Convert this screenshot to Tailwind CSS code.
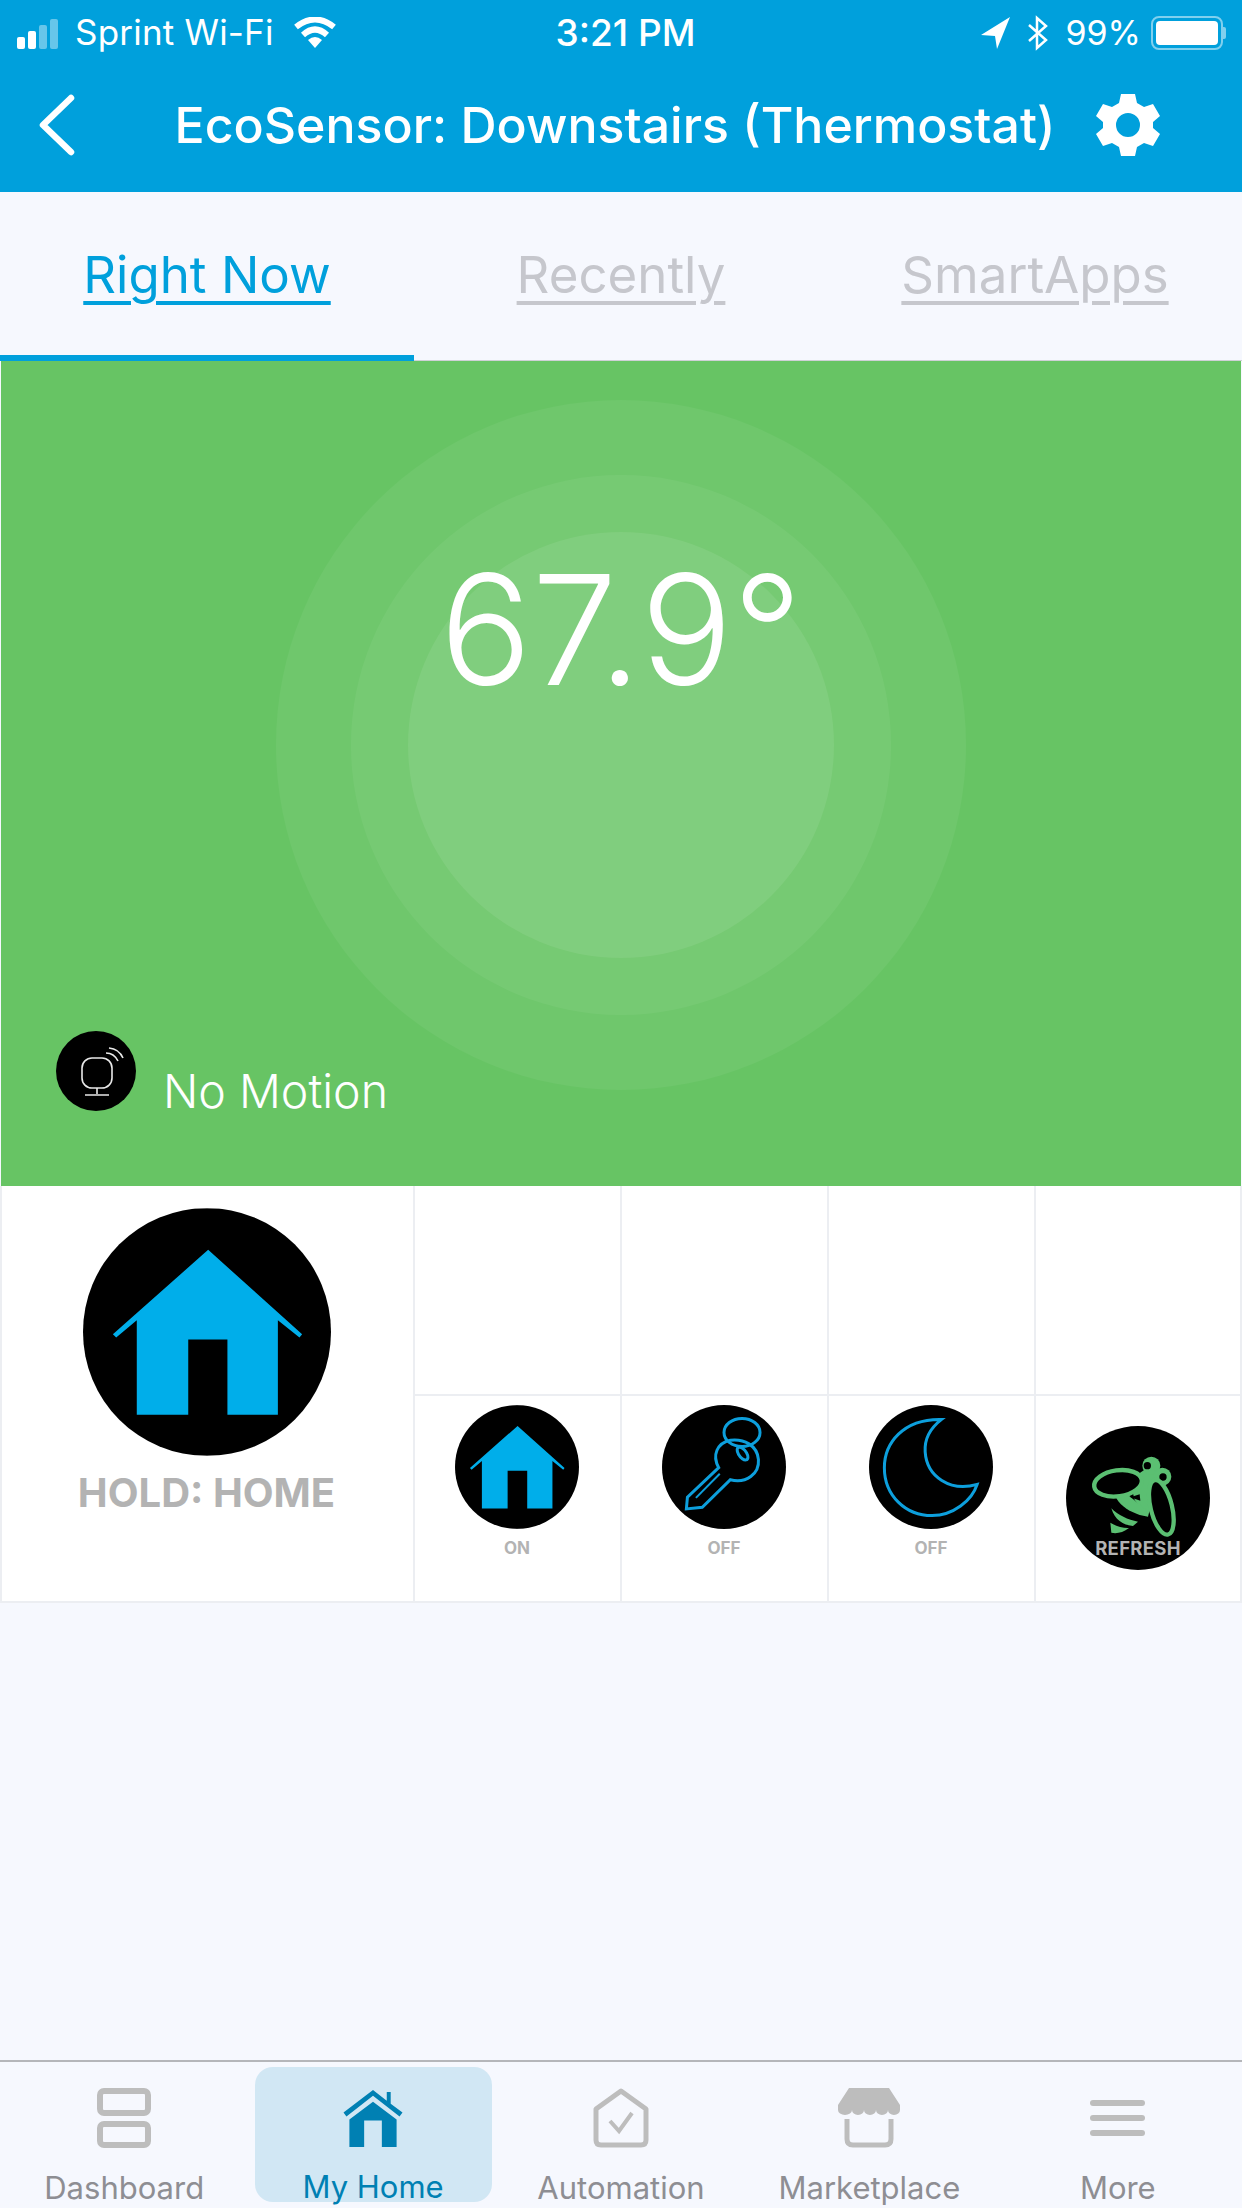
<!DOCTYPE html>
<html lang="en">
<head>
    <meta charset="UTF-8">
    <meta name="viewport" content="width=device-width, initial-scale=1.0">
    <title>EcoSensor: Downstairs (Thermostat)</title>
    <script src="https://cdn.jsdelivr.net/npm/@tailwindcss/browser@4"></script>
</head>
<body class="bg-[#f6f8fe] font-['Inter',sans-serif]">
<div class="w-[1242px] h-[2208px] flex flex-col overflow-hidden">

    <!-- Status bar + title -->
    <header class="h-[192px] shrink-0 bg-[#00a0dc] text-white">
        <div class="h-[64px] grid grid-cols-3 items-center pl-[17px] pr-[16px] pt-[1px] text-[35px] leading-none">
            <div class="flex items-center">
                <div class="flex items-end gap-[3px] h-[30px] mt-[2px]">
                    <span class="w-[8px] h-[12px] rounded-[2px] bg-white"></span>
                    <span class="w-[8px] h-[18px] rounded-[2px] bg-white"></span>
                    <span class="w-[8px] h-[24px] rounded-[2px] bg-white/40"></span>
                    <span class="w-[8px] h-[30px] rounded-[2px] bg-white/40"></span>
                </div>
                <span class="ml-[17px] tracking-[0.2px] whitespace-nowrap">Sprint Wi-Fi</span>
                <svg class="ml-[19px] shrink-0" width="44" height="32" viewBox="0 0 44 32">
                    <path d="M22 31 L15 23 Q22 17 29 23 Z" fill="#fff"/>
                    <path d="M10 18 Q22 7 34 18 M3 10 Q22 -5 41 10" fill="none" stroke="#fff" stroke-width="6"/>
                </svg>
            </div>
            <div class="text-center font-medium text-[37px] pl-[8px]">3:21 PM</div>
            <div class="flex items-center justify-end text-[34px]">
                <svg width="30" height="32" viewBox="0 0 30 32"><path d="M29 0 L0 18 L14 19 L16 32 Z" fill="#fff"/></svg>
                <svg class="ml-[15px]" width="24" height="36" viewBox="0 0 24 36"><path d="M3 10 L20 25 L11 33 V3 L20 11 L3 26" fill="none" stroke="#fff" stroke-width="2.5"/></svg>
                <span class="ml-[15px]">99%</span>
                <div class="ml-[10px] w-[72px] h-[34px] rounded-[8px] border-2 border-white/50 p-[3px]">
                    <div class="h-full w-full rounded-[4px] bg-white"></div>
                </div>
                <span class="w-[3px] h-[12px] rounded-r-[2px] bg-white/50"></span>
            </div>
        </div>
        <div class="h-[128px] flex items-center pb-[6px] pl-[38px] pr-[82px]">
            <svg class="shrink-0" width="38" height="62" viewBox="0 0 38 62"><path d="M33 4 L5 31 L33 58" fill="none" stroke="#fff" stroke-width="6.5" stroke-linecap="round" stroke-linejoin="round"/></svg>
            <h1 class="flex-1 text-center text-[50px] leading-none font-medium whitespace-nowrap pl-[94px]">EcoSensor: Downstairs (Thermostat)</h1>
            <svg class="ml-[36px] shrink-0" width="64" height="64" viewBox="0 0 64 64">
                <path fill="#fff" fill-rule="evenodd" d="M25 1 H39 L41 10 L48 14 L57 11 L64 23 L57 29 V35 L64 41 L57 53 L48 50 L41 54 L39 63 H25 L23 54 L16 50 L7 53 L0 41 L7 35 V29 L0 23 L7 11 L16 14 L23 10 Z M32 20 A12 12 0 1 0 32 44 A12 12 0 1 0 32 20 Z"/>
            </svg>
        </div>
    </header>

    <!-- Tabs -->
    <nav class="h-[169px] shrink-0 grid grid-cols-3 text-[51px] leading-none border-b border-[#cfd1d6]">
        <div class="flex items-center justify-center pt-[2px] border-b-[6px] border-[#00a0dc] -mb-px text-[#00a0dc] underline underline-offset-[8px] decoration-[4px]">Right Now</div>
        <div class="flex items-center justify-center pb-[4px] text-[#c6c7cd] underline underline-offset-[8px] decoration-[4px]">Recently</div>
        <div class="flex items-center justify-center pb-[4px] text-[#c6c7cd] underline underline-offset-[8px] decoration-[4px]">SmartApps</div>
    </nav>

    <!-- Temperature panel -->
    <section class="relative h-[825px] shrink-0 mx-px bg-[#67c464] text-white flex flex-col">
        <div class="absolute left-[275px] top-[39px] w-[690px] h-[690px] rounded-full bg-white/5"></div>
        <div class="absolute left-[350px] top-[114px] w-[540px] h-[540px] rounded-full bg-white/5"></div>
        <div class="absolute left-[407px] top-[171px] w-[426px] h-[426px] rounded-full bg-white/8"></div>
        <div class="relative pt-[192px] text-center text-[153px] leading-[1] font-light">67.9°</div>
        <div class="relative mt-auto pb-[72px] pl-[55px] flex">
            <div class="w-[80px] h-[80px] rounded-full bg-black flex items-center justify-center">
                <svg width="80" height="80" viewBox="0 0 80 80" fill="none" stroke="#e8e8e8" stroke-width="1.6">
                    <rect x="26" y="27" width="30" height="30" rx="10"/>
                    <path d="M41 57 V63 M29 64 H53"/>
                    <path d="M50 22 Q58 22 62 30 M53 17 Q63 18 67 27"/>
                </svg>
            </div>
            <span class="ml-[27px] mt-[37px] text-[46.5px] leading-none font-light whitespace-nowrap">No Motion</span>
        </div>
    </section>

    <!-- Tiles -->
    <section class="grid grid-cols-[415px_207px_207px_207px_206px] grid-rows-[210px_207px] h-[417px] shrink-0 bg-white text-[#b3b3b3] font-bold">
        <div class="row-span-2 border-x-2 border-b-2 border-[#eceef2] flex flex-col items-center pt-[22px] pr-[2px]">
            <svg class="rounded-full" width="248" height="248" viewBox="248 83 747 745">
                <rect x="248" y="83" width="747" height="745" fill="#000"/>
                <path d="M625 208 L908 462 L900 472 L835 420 V705 H683 V478 H565 V705 H410 V420 L348 472 L338 462 Z" fill="#00aeea"/>
            </svg>
            <span class="mt-[17px] text-[40px] leading-none">HOLD: HOME</span>
        </div>
        <div class="border-r-2 border-b-2 border-[#eceef2]"></div>
        <div class="border-r-2 border-b-2 border-[#eceef2]"></div>
        <div class="border-r-2 border-b-2 border-[#eceef2]"></div>
        <div class="border-r-2 border-b-2 border-[#eceef2]"></div>

        <div class="border-r-2 border-b-2 border-[#eceef2] flex flex-col items-center pt-[9px] pr-[1px]">
            <svg class="rounded-full" width="124" height="124" viewBox="248 83 747 745">
                <rect x="248" y="83" width="747" height="745" fill="#000"/>
                <path d="M625 208 L908 462 L900 472 L835 420 V705 H683 V478 H565 V705 H410 V420 L348 472 L338 462 Z" fill="#00aeea"/>
            </svg>
            <span class="mt-[11px] text-[17px] leading-none">ON</span>
        </div>
        <div class="border-r-2 border-b-2 border-[#eceef2] flex flex-col items-center pt-[9px] pr-[1px]">
            <svg class="rounded-full" width="124" height="124" viewBox="476 75 234 370" preserveAspectRatio="none">
                <rect x="476" y="75" width="234" height="370" fill="#000"/>
                <g fill="none" stroke="#0d9fdc">
                    <ellipse cx="627" cy="157" rx="34" ry="42" vector-effect="non-scaling-stroke" stroke-width="3"/>
                    <path d="M583 262 L524 350 L522 385 L552 380 L605 298 C635 310 660 280 658 238 C656 195 630 175 605 180 C580 188 570 225 583 262 Z" vector-effect="non-scaling-stroke" stroke-width="3"/>
                    <ellipse cx="628" cy="220" rx="8" ry="20" transform="rotate(-20 628 220)" vector-effect="non-scaling-stroke" stroke-width="3"/>
                    <path d="M540 352 L585 280" vector-effect="non-scaling-stroke" stroke-width="2"/>
                </g>
            </svg>
            <span class="mt-[11px] text-[17px] leading-none">OFF</span>
        </div>
        <div class="border-r-2 border-b-2 border-[#eceef2] flex flex-col items-center pt-[9px] pr-[1px]">
            <svg class="rounded-full" width="124" height="124" viewBox="866 75 234 370" preserveAspectRatio="none">
                <rect x="866" y="75" width="234" height="370" fill="#000"/>
                <path d="M1003 118 C930 115 895 190 895 262 C895 345 935 405 985 405 C1025 405 1060 360 1070 312 C1020 335 975 290 972 215 C970 170 985 140 1003 118 Z" fill="none" stroke="#0d9fdc" stroke-width="3" vector-effect="non-scaling-stroke"/>
            </svg>
            <span class="mt-[11px] text-[17px] leading-none">OFF</span>
        </div>
        <div class="border-r-2 border-b-2 border-[#eceef2] flex justify-center pt-[30px]">
            <div class="relative w-[144px] h-[144px] rounded-full bg-black">
                <svg class="rounded-full" width="144" height="144" viewBox="80 78 430 432">
                    <path d="M270 240 L335 195 L378 245 L340 290 L325 350 L285 300 Z" fill="#5bbf72"/>
                    <circle cx="335" cy="197" r="27" fill="#5bbf72"/>
                    <circle cx="368" cy="230" r="27" fill="#5bbf72"/>
                    <circle cx="323" cy="197" r="11" fill="#000"/>
                    <circle cx="370" cy="231" r="11" fill="#000"/>
                    <path d="M230 295 L265 285 L320 330 L325 350 L300 345 C270 335 245 320 230 295 Z" fill="#5bbf72"/>
                    <path d="M215 325 C235 345 265 360 295 365 L280 378 C250 375 225 360 215 325 Z M212 368 C228 378 250 385 268 384 C250 398 230 402 215 398 Z" fill="#5bbf72"/>
                    <path d="M272 292 L300 283 L302 302 Z" fill="#000"/>
                    <ellipse cx="235" cy="250" rx="72" ry="39" transform="rotate(-8 235 250)" fill="#000" stroke="#5bbf72" stroke-width="13"/>
                    <ellipse cx="365" cy="322" rx="32" ry="84" transform="rotate(-14 365 322)" fill="#000" stroke="#5bbf72" stroke-width="13"/>
                </svg>
                <span class="absolute inset-x-0 top-[113px] text-center text-[18.5px] leading-none tracking-[0.3px]">REFRESH</span>
            </div>
        </div>
    </section>

    <!-- Bottom tab bar -->
    <footer class="mt-auto h-[148px] shrink-0 border-t-2 border-[#b5b6ba] grid grid-cols-5 text-[31px] leading-none text-[#8e8e93]">
        <div class="flex flex-col items-center pt-[26px]">
            <svg width="54" height="60" viewBox="0 0 54 60" fill="none" stroke="#bdbdbd" stroke-width="6">
                <rect x="3" y="3" width="48" height="22" rx="4"/>
                <rect x="3" y="36" width="48" height="21" rx="4"/>
            </svg>
            <span class="mt-[24px]">Dashboard</span>
        </div>
        <div class="flex flex-col items-center pt-[5px] pl-[1px]">
            <div class="w-[237px] h-[135px] rounded-[18px] bg-[#d1e7f4] flex flex-col items-center pt-[21px] text-[#0080b3]">
                <svg width="64" height="60" viewBox="0 0 64 60">
                    <path d="M2 25 L32 2 L46 13 V4 H50 V16 L62 25 L59 29 L32 8 L5 29 Z" fill="#0080b3"/>
                    <path d="M32 14 L56 32 V60 H41 V33 H23 V60 H8 V32 Z" fill="#0080b3"/>
                </svg>
                <span class="mt-[24px]">My Home</span>
            </div>
        </div>
        <div class="flex flex-col items-center pt-[26px]">
            <svg width="56" height="60" viewBox="0 0 56 60" fill="none" stroke="#bdbdbd" stroke-width="5">
                <path d="M28 3 L53 21 V52 Q53 57 48 57 H8 Q3 57 3 52 V21 Z" stroke-linejoin="round"/>
                <path d="M17 33 L26 43 L39 25" stroke-width="4"/>
            </svg>
            <span class="mt-[24px]">Automation</span>
        </div>
        <div class="flex flex-col items-center pt-[26px]">
            <svg width="62" height="60" viewBox="0 0 62 60">
                <path d="M11 0 H51 L62 17 V22 A6 5 0 0 1 50 22 A6 5 0 0 1 38 22 A6 5 0 0 1 26 22 A6 5 0 0 1 14 22 A7 5 0 0 1 0 22 V17 Z" fill="#bdbdbd"/>
                <path d="M9 31 V51 Q9 57 15 57 H47 Q53 57 53 51 V31" fill="none" stroke="#bdbdbd" stroke-width="5"/>
            </svg>
            <span class="mt-[24px]">Marketplace</span>
        </div>
        <div class="flex flex-col items-center pt-[38px]">
            <div class="flex flex-col gap-[9px]">
                <span class="block w-[55px] h-[6px] rounded-[3px] bg-[#bdbdbd]"></span>
                <span class="block w-[55px] h-[6px] rounded-[3px] bg-[#bdbdbd]"></span>
                <span class="block w-[55px] h-[6px] rounded-[3px] bg-[#bdbdbd]"></span>
            </div>
            <span class="mt-[36px]">More</span>
        </div>
    </footer>
</div>
</body>
</html>
